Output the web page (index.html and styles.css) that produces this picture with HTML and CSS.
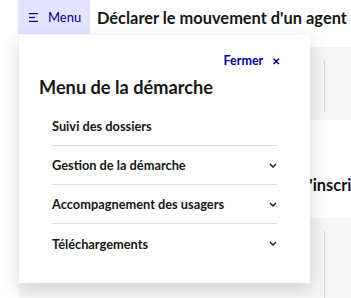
FILE: index.html
```html
<!DOCTYPE html>
<html lang="fr">
<head>
<meta charset="utf-8">
<link rel="stylesheet" href="styles.css">
</head>
<body>
<header class="header">
  <button class="menu-btn">
    <svg class="menu-icon" width="10" height="9" viewBox="0 0 10 9"><rect x="0" y="0" width="9" height="1.2" fill="#000091"/><rect x="0" y="3.9" width="6" height="1.2" fill="#000091"/><rect x="0" y="7.8" width="9" height="1.2" fill="#000091"/></svg>
    <span>Menu</span>
  </button>
  <h1 class="page-title">Déclarer le mouvement d'un agent</h1>
</header>
<main class="content">
  <div class="box box-top"><span class="vline"></span></div>
  <h2 class="section-title">Suivi de l'inscription</h2>
  <div class="box box-bottom"><span class="vline"></span></div>
</main>
<nav class="panel">
  <div class="panel-close">Fermer <span class="x">✕</span></div>
  <div class="panel-title">Menu de la démarche</div>
  <ul class="panel-list">
    <li class="item">Suivi des dossiers</li>
    <li class="item">Gestion de la démarche<svg class="chev" width="8" height="5" viewBox="0 0 8 5"><path d="M1 1l3 3 3-3" fill="none" stroke="#161616" stroke-width="1.3"/></svg></li>
    <li class="item">Accompagnement des usagers<svg class="chev" width="8" height="5" viewBox="0 0 8 5"><path d="M1 1l3 3 3-3" fill="none" stroke="#161616" stroke-width="1.3"/></svg></li>
    <li class="item">Téléchargements<svg class="chev" width="8" height="5" viewBox="0 0 8 5"><path d="M1 1l3 3 3-3" fill="none" stroke="#161616" stroke-width="1.3"/></svg></li>
  </ul>
</nav>
</body>
</html>
```
FILE: styles.css
```css
* { box-sizing: border-box; }
html, body { margin: 0; padding: 0; }
body {
  width: 351px;
  height: 298px;
  overflow: hidden;
  background: #fff;
  font-family: "Lato", "Noto Sans", sans-serif;
  color: #161616;
  position: relative;
}
.header {
  display: flex;
  align-items: center;
  height: 34px;
  padding-left: 18px;
  gap: 7px;
  white-space: nowrap;
}
.menu-btn {
  display: flex;
  align-items: center;
  gap: 9px;
  height: 34px;
  width: 72px;
  padding: 0 0 0 11px;
  border: 0;
  background: #e3e3fd;
  color: #000091;
  font-family: inherit;
  font-size: 13px;
}
.page-title {
  margin: 0;
  font-size: 16.4px;
  font-weight: 700;
}
.content {
  padding-left: 19px;
  padding-top: 13px;
}
.box {
  background: #f6f6f6;
  display: flex;
  padding-left: 305px;
}
.box-top { height: 73px; padding-top: 13px; padding-bottom: 8px; }
.box-bottom { height: 80px; padding-top: 13px; }
.vline { width: 1px; background: #d6d6d6; }
.section-title {
  margin: 0;
  height: 98px;
  padding-top: 55px;
  font-size: 16.4px;
  font-weight: 700;
  white-space: nowrap;
  padding-left: 225px;
}
.panel {
  position: absolute;
  top: 35px;
  left: 19px;
  width: 291px;
  height: 248px;
  background: #fff;
  box-shadow: 0 6px 18px rgba(0,0,0,0.16);
  padding: 17px 30px 0 20px;
}
.panel-close {
  text-align: right;
  color: #000091;
  font-size: 12.5px;
  font-weight: 700;
  height: 17px;
  line-height: 17px;
}
.x { margin-left: 6px; font-size: 10px; }
.panel-title {
  margin-top: 5px;
  font-size: 18.2px;
  font-weight: 700;
  height: 26px;
  line-height: 26px;
}
.panel-list {
  list-style: none;
  margin: 7px 0 0 13px;
  padding: 0;
  width: 225px;
}
.item {
  display: flex;
  justify-content: space-between;
  align-items: center;
  height: 39px;
  font-size: 12.8px;
  font-weight: 700;
  border-bottom: 1px solid #dddddd;
}
.item:last-child { border-bottom: 0; }
```
